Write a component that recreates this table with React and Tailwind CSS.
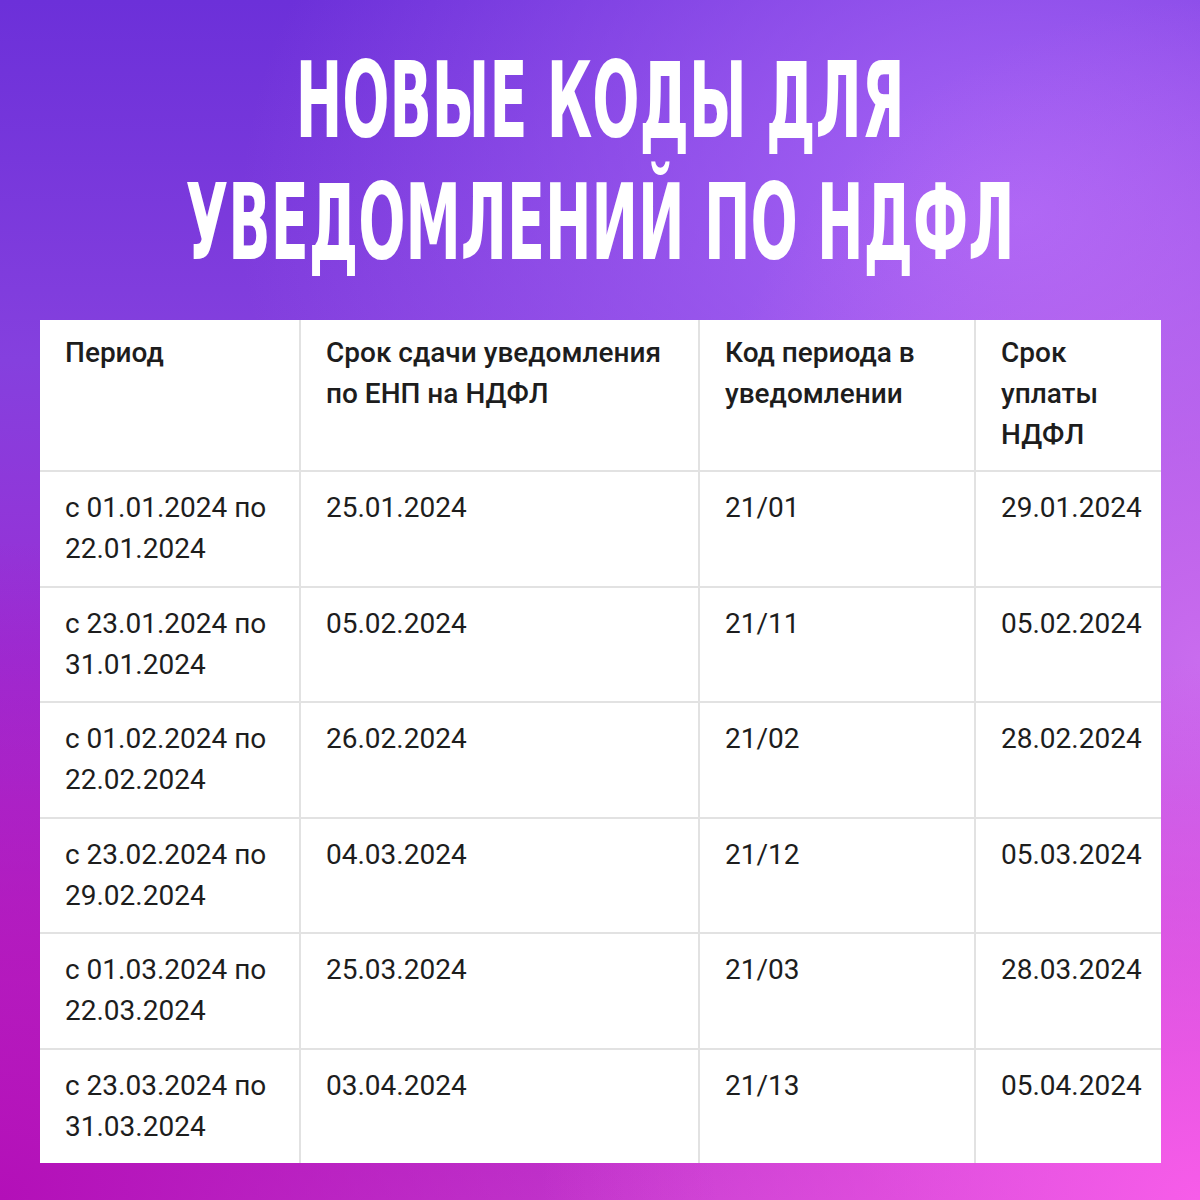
const rows = [
  ["с 01.01.2024 по", "22.01.2024", "25.01.2024", "21/01", "29.01.2024"],
  ["с 23.01.2024 по", "31.01.2024", "05.02.2024", "21/11", "05.02.2024"],
  ["с 01.02.2024 по", "22.02.2024", "26.02.2024", "21/02", "28.02.2024"],
  ["с 23.02.2024 по", "29.02.2024", "04.03.2024", "21/12", "05.03.2024"],
  ["с 01.03.2024 по", "22.03.2024", "25.03.2024", "21/03", "28.03.2024"],
  ["с 23.03.2024 по", "31.03.2024", "03.04.2024", "21/13", "05.04.2024"],
]

function Cell({ head, children }) {
  return (
    <div
      className={
        "bg-white pl-[25px] pr-2 text-[28px] leading-[41px] text-[#1d1d1d] " +
        (head ? "pt-[12px] font-medium" : "pt-[15px]")
      }
    >
      {children}
    </div>
  )
}

export default function App() {
  return (
    <div
      className="relative h-[1200px] w-[1200px] overflow-hidden bg-[radial-gradient(ellipse_55%_45%_at_100%_100%,#f75ce9_0%,rgba(247,92,233,0)_100%),radial-gradient(ellipse_60%_55%_at_0%_100%,#b30fb8_0%,rgba(179,15,184,0)_100%),radial-gradient(ellipse_45%_55%_at_100%_55%,#c96cee_0%,rgba(201,108,238,0)_100%),radial-gradient(ellipse_65%_50%_at_85%_18%,#a866f7_0%,rgba(168,102,247,0)_100%),linear-gradient(180deg,#6c30d9_0%,#8540de_30%,#9a2ed4_55%,#b52cc8_80%,#c43ccf_100%)]"
      style={{ fontFamily: "Roboto, 'Noto Sans', sans-serif" }}
    >
      <div
        className="pt-[40px] text-[106px] leading-[122px] font-bold text-white"
        style={{ fontFamily: "'DejaVu Sans Condensed', 'DejaVu Sans', sans-serif" }}
      >
        <div className="flex justify-center">
          <span className="shrink-0 origin-center scale-x-[0.583] whitespace-nowrap">НОВЫЕ КОДЫ ДЛЯ</span>
        </div>
        <div className="flex justify-center">
          <span className="shrink-0 origin-center scale-x-[0.583] whitespace-nowrap">УВЕДОМЛЕНИЙ ПО НДФЛ</span>
        </div>
      </div>

      <div className="ml-[40px] mt-[36px] grid w-[1121px] grid-cols-[259px_397px_274px_185px] grid-rows-[150px_114px_113px_114px_113px_114px_113px] gap-[2px] bg-[#e2e2e2]">
        <Cell head>Период</Cell>
        <Cell head>
          Срок сдачи уведомления
          <br />
          по ЕНП на НДФЛ
        </Cell>
        <Cell head>
          Код периода в
          <br />
          уведомлении
        </Cell>
        <Cell head>
          Срок
          <br />
          уплаты
          <br />
          НДФЛ
        </Cell>
        {rows.map(r => (
          <div key={r[0] + r[1]} className="contents">
            <Cell>
              {r[0]}
              <br />
              {r[1]}
            </Cell>
            <Cell>{r[2]}</Cell>
            <Cell>{r[3]}</Cell>
            <Cell>{r[4]}</Cell>
          </div>
        ))}
      </div>
    </div>
  )
}
